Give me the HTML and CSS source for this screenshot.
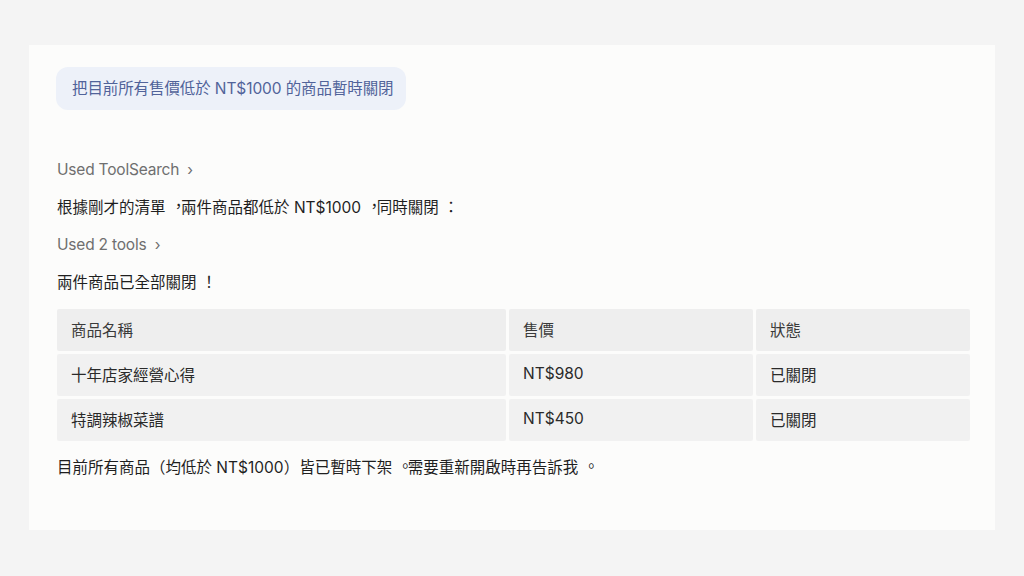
FILE: index.html
```html
<!DOCTYPE html>
<html lang="zh-TW">
<head>
<meta charset="utf-8">
<link rel="stylesheet" href="styles.css">
</head>
<body>
<main class="card">
  <div class="bubble">把目前所有售價低於 NT$1000 的商品暫時關閉</div>
  <div class="tool">Used ToolSearch <span class="chev">›</span></div>
  <p class="line">根據剛才的清單<span class="pc">，</span>兩件商品都低於 NT$1000<span class="pc">，</span>同時關閉<span class="pm">：</span></p>
  <div class="tool">Used 2 tools <span class="chev">›</span></div>
  <p class="line">兩件商品已全部關閉<span class="pm">！</span></p>
  <div class="table">
    <div class="cell head">商品名稱</div>
    <div class="cell head">售價</div>
    <div class="cell head">狀態</div>
    <div class="cell">十年店家經營心得</div>
    <div class="cell">NT$980</div>
    <div class="cell">已關閉</div>
    <div class="cell">特調辣椒菜譜</div>
    <div class="cell">NT$450</div>
    <div class="cell">已關閉</div>
  </div>
  <p class="line last">目前所有商品（均低於 NT$1000）皆已暫時下架<span class="pp">。</span>需要重新開啟時再告訴我<span class="pp">。</span></p>
</main>
</body>
</html>
```
FILE: styles.css
```css
html, body {
  margin: 0;
  padding: 0;
  background: #f4f4f4;
}
body {
  padding: 45px 29px 46px 29px;
  font-family: Inter, "Noto Sans CJK TC", sans-serif;
  font-size: 15.5px;
  color: #1f1f1f;
}
.card {
  background: #fcfcfb;
  height: 485px;
  box-sizing: border-box;
  padding: 22px 25px 0 28px;
}
.bubble {
  display: inline-block;
  background: #edf1f9;
  color: #51639a;
  border-radius: 12px;
  height: 43px;
  line-height: 43px;
  padding: 0 12px 0 16px;
  margin-left: -1px;
  margin-bottom: 48px;
  letter-spacing: -0.1px;
}
.tool {
  color: #6f6f6f;
  line-height: 24px;
  margin-bottom: 13.5px;
  letter-spacing: -0.2px;
}
.chev {
  display: inline-block;
  margin-left: 4px;
  font-size: 15px;
}
.line {
  margin: 0 0 13.5px 0;
  line-height: 24px;
}
.pc, .pp {
  margin-left: 0.34em;
  letter-spacing: -0.34em;
  line-height: 0;
}
.pc {
  vertical-align: 0.05em;
}
.pp {
  vertical-align: 0.04em;
}
.pm {
  margin-left: 0.3em;
  letter-spacing: -0.3em;
}
.table {
  display: grid;
  grid-template-columns: 449px 244px 214px;
  grid-auto-rows: 42px;
  gap: 3px;
  margin-top: 14px;
  margin-bottom: 15px;
  width: 913px;
}
.cell {
  background: #f1f1f1;
  border-radius: 2px;
  display: flex;
  align-items: center;
  padding-left: 14px;
  padding-bottom: 2px;
  box-sizing: border-box;
  color: #2a2a2a;
}
.cell.head {
  background: #eeeeee;
  color: #3a3a3a;
}
.last {
  margin: 0;
}
```
